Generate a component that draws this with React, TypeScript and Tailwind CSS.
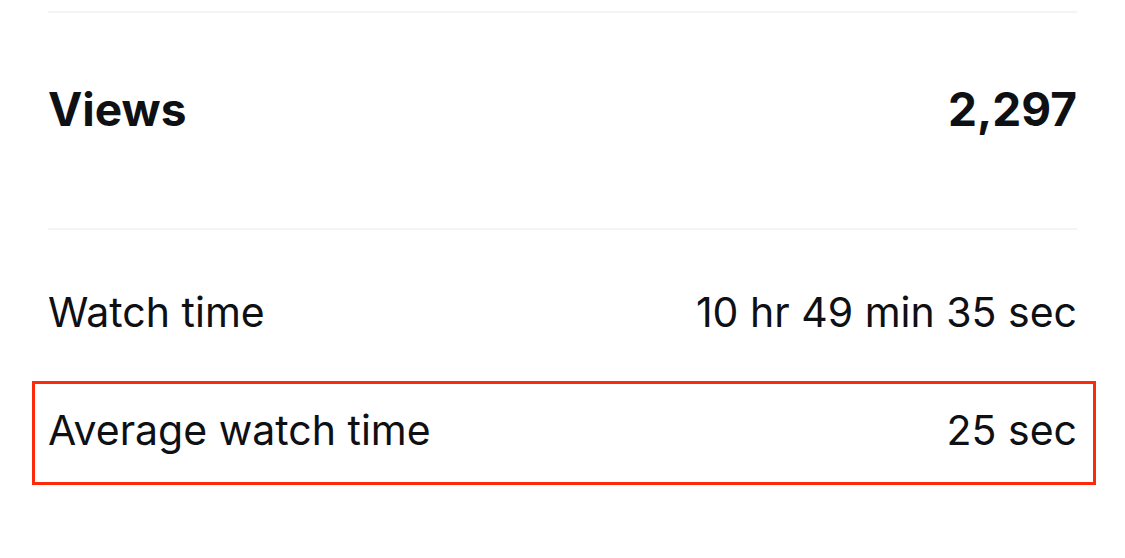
export default function App() {
  return (
    <div
      className="w-[1125px] h-[558px] bg-white text-[#0e1014] px-[48px] pt-[11px]"
      style={{ fontFamily: "Inter, 'Noto Sans', sans-serif" }}
    >
      <div className="h-[2px] bg-[#f4f4f4]" />
      <div className="h-[215px] pb-[24px] flex items-center justify-between font-bold text-[46px] leading-none">
        <span>Views</span>
        <span>2,297</span>
      </div>
      <div className="h-[2px] bg-[#f4f4f4]" />
      <div className="h-[151px] pt-[13px] flex items-center justify-between text-[41px] leading-none">
        <span>Watch time</span>
        <span>10 hr 49 min 35 sec</span>
      </div>
      <div className="relative h-[104px] pb-[6px] flex items-center justify-between text-[41px] leading-none">
        <div className="absolute -left-[16px] -right-[19px] inset-y-0 border-[3px] border-[#fa2a0a]" />
        <span>Average watch time</span>
        <span>25 sec</span>
      </div>
    </div>
  );
}
